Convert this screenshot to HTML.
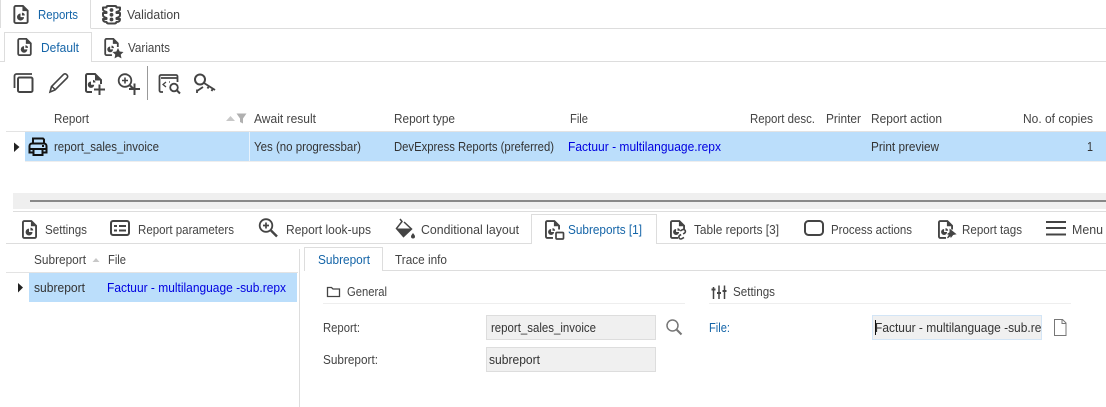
<!DOCTYPE html>
<html><head><meta charset="utf-8"><style>
html,body{margin:0;padding:0;background:#fff;width:1106px;height:407px;overflow:hidden}
svg{display:block}
text{font-family:"Liberation Sans",sans-serif;font-size:12.5px;fill:#444}
.b{fill:#1565a8}.d{fill:#333}.l{fill:#0000e0}
.i{fill:none;stroke:#444;stroke-width:1.8}
</style></head><body>
<svg width="1106" height="407" viewBox="0 0 1106 407" xmlns="http://www.w3.org/2000/svg">
<defs>
<symbol id="doc" viewBox="0 0 16 20" overflow="visible">
<path d="M1 2.500A1.500 1.500 0 0 1 2.500 1H10L15 6V17.500A1.500 1.500 0 0 1 13.500 19H2.500A1.500 1.500 0 0 1 1 17.500Z" fill="none" stroke="#444" stroke-width="2"/>
<path d="M9.500 1.500V6.500H14.500Z" fill="#444"/>
<path d="M7.500 9A3.700 3.700 0 1 0 11.200 12.700H7.500Z" fill="#444"/>
<path d="M9 8A3 3 0 0 1 12 11H9Z" fill="#444"/>
</symbol>
<symbol id="docb" viewBox="0 0 16 20" overflow="visible">
<path d="M8.500 19H2.500A1.500 1.500 0 0 1 1 17.500V2.500A1.500 1.500 0 0 1 2.500 1H10L15 6V10" fill="none" stroke="#444" stroke-width="2"/>
<path d="M9.500 1.500V6.500H14.500Z" fill="#444"/>
<path d="M6.500 9.500A3.200 3.200 0 1 0 9.700 12.700H6.500Z" fill="#444"/>
<path d="M8 8.500A2.800 2.800 0 0 1 10.800 11.300H8Z" fill="#444"/>
</symbol>
</defs>

<!-- top tabs -->
<path d="M0 28.500H1106" stroke="#ddd"/>
<rect x="0" y="-1" width="90.500" height="30" fill="#fff"/>
<path d="M0.500 0V28M90.500 0V28" stroke="#ddd"/>
<use href="#doc" x="13" y="5" width="16" height="19"/>
<text x="38" y="19" class="b" textLength="40" lengthAdjust="spacingAndGlyphs">Reports</text>
<path d="M108 6H115Q116.500 6 116.500 7.500H120V9.500Q120 11 116.500 12V13H120V15Q120 17 116.500 18V19H120Q120 22 116.500 22Q116 23.500 114.500 23.500H108.500Q107 23.500 106.500 22Q103 22 103 19H106.500V18Q103 17 103 15V13H106.500V12Q103 11 103 9.500V7.500H106.500Q106.500 6 108 6Z" fill="none" stroke="#444" stroke-width="2" stroke-linejoin="round"/>
<g fill="#444"><circle cx="111.500" cy="10" r="1.900"/><circle cx="111.500" cy="14.800" r="1.900"/><circle cx="111.500" cy="19.500" r="1.900"/></g>
<text x="127" y="19" textLength="53" lengthAdjust="spacingAndGlyphs">Validation</text>

<!-- second tabs -->
<path d="M0 61.500H1106" stroke="#ddd"/>
<rect x="4" y="32" width="87" height="30" fill="#fff"/>
<path d="M4.500 62V32.500H91.500V62" fill="none" stroke="#ddd"/>
<use href="#doc" x="17" y="38" width="15" height="18"/>
<text x="41" y="52" class="b" textLength="38" lengthAdjust="spacingAndGlyphs">Default</text>
<use href="#docb" x="104" y="38" width="15" height="18"/>
<path d="M118 48l1.700 3.500 3.800.5-2.800 2.600.8 3.800-3.500-1.900-3.500 1.900.8-3.800-2.800-2.600 3.800-.5Z" fill="#444"/>
<text x="128" y="52" textLength="42" lengthAdjust="spacingAndGlyphs">Variants</text>

<!-- toolbar -->
<g class="i">
<path d="M14.500 88V76a2 2 0 0 1 2-2H32" stroke-width="1.800"/>
<rect x="18" y="77.500" width="14.500" height="14.500" rx="1.500" stroke-width="2"/>
<path d="M50 92l1.500-5.500 12-12a2 2 0 0 1 3 0l.5.500a2 2 0 0 1 0 3l-12 12Z" stroke-width="1.600"/>
<path d="M52 86.500l3.500 3.500" stroke-width="1.400"/>
<path d="M92 92H87.500A1.500 1.500 0 0 1 86 90.500V75.500A1.500 1.500 0 0 1 87.500 74H95L101 80V84" stroke-width="2"/>
<circle cx="125" cy="80.500" r="6.300"/>
<path d="M130 85.500l3 3" stroke-width="2.200"/>
<path d="M122 80.500h6M125 77.500v6" stroke-width="1.600"/>
<path d="M161 78h17M163 92h-2a1.500 1.500 0 0 1-1.500-1.500v-14A1.500 1.500 0 0 1 161 75h15a1.500 1.500 0 0 1 1.500 1.500V82" stroke-width="1.800"/>
<path d="M166 82l-3 2.500 3 2.500M170 82l-1 0" stroke-width="1.300"/>
<circle cx="174" cy="87.500" r="3.800"/>
<path d="M177 90.500l3 3" stroke-width="2"/>
<circle cx="200" cy="79.500" r="5" stroke-width="2"/>
<path d="M204 83l11 7M209 86l-1.500 2.500M213 88.500l-1.500 2.500" stroke-width="1.900"/>
<path d="M203 87l-6 4M197 89.500v3.500" stroke-width="1.800"/>
</g>
<path d="M95 74.500V80.500H100.500Z" fill="#444"/>
<path d="M91 81.500A3.200 3.200 0 1 0 94.200 84.700H91Z" fill="#444"/>
<path d="M93 80a2.500 2.500 0 0 1 2.500 2.500H93Z" fill="#444"/>
<path d="M99.500 84.500V95M94 89.500H105" stroke="#444" stroke-width="2" fill="none"/>
<path d="M134.500 83.500V95M129 89H140" stroke="#444" stroke-width="2" fill="none"/>
<path d="M147.500 66V100" stroke="#999"/>

<!-- grid header -->
<text x="54" y="123" textLength="35" lengthAdjust="spacingAndGlyphs">Report</text>
<path d="M226 121l4.500-5 4.500 5Z" fill="#c8c8c8"/>
<path d="M236.500 113.500H246.500L243 118.500V123.500L240 122V118.500Z" fill="#b0b0b0"/>
<text x="254" y="123" textLength="62" lengthAdjust="spacingAndGlyphs">Await result</text>
<text x="394" y="123" textLength="61" lengthAdjust="spacingAndGlyphs">Report type</text>
<text x="570" y="123" textLength="18" lengthAdjust="spacingAndGlyphs">File</text>
<text x="750" y="123" textLength="65" lengthAdjust="spacingAndGlyphs">Report desc.</text>
<text x="826" y="123" textLength="35" lengthAdjust="spacingAndGlyphs">Printer</text>
<text x="871" y="123" textLength="71" lengthAdjust="spacingAndGlyphs">Report action</text>
<text x="1023" y="123" textLength="70" lengthAdjust="spacingAndGlyphs">No. of copies</text>
<rect x="6" y="131" width="1100" height="1" fill="#e3e3e3"/>
<rect x="25" y="132" width="1081" height="29" fill="#bbdefb"/>
<rect x="25" y="161" width="1081" height="1" fill="#eee"/>
<rect x="249" y="132" width="1" height="29" fill="#e8f3fd"/>
<path d="M14 142.500l5.500 4.500-5.500 5Z" fill="#222"/>
<g fill="none" stroke="#111" stroke-width="2">
<path d="M33 143V138.500H43L44 139.500V143"/>
<path d="M32.500 152.500H29.500V146a2.500 2.500 0 0 1 2.500-2.500H44a2.500 2.500 0 0 1 2.500 2.500V152.500H43.500"/>
<rect x="33.500" y="149" width="9" height="6"/>
</g>
<rect x="30" y="148" width="16" height="2" fill="#111"/>
<rect x="42" y="145" width="2" height="2" fill="#111"/>
<text x="54" y="151" class="d" textLength="105" lengthAdjust="spacingAndGlyphs">report_sales_invoice</text>
<text x="254" y="151" class="d" textLength="107" lengthAdjust="spacingAndGlyphs">Yes (no progressbar)</text>
<text x="394" y="151" class="d" textLength="160" lengthAdjust="spacingAndGlyphs">DevExpress Reports (preferred)</text>
<text x="568" y="151" class="l" textLength="153" lengthAdjust="spacingAndGlyphs">Factuur - multilanguage.repx</text>
<text x="871" y="151" class="d" textLength="68" lengthAdjust="spacingAndGlyphs">Print preview</text>
<text x="1087" y="151" class="d" textLength="6" lengthAdjust="spacingAndGlyphs">1</text>

<!-- scrollbar / splitter -->
<rect x="13" y="193" width="1093" height="16" fill="#efefef"/>
<rect x="30" y="200" width="1076" height="2" fill="#888"/>
<rect x="13" y="211" width="1093" height="1" fill="#ddd"/>

<!-- bottom tabs -->
<path d="M6 243.500H1106" stroke="#ddd"/>
<rect x="531" y="214" width="126" height="30" fill="#fff"/>
<path d="M531.500 244V214.500H656.500V244" fill="none" stroke="#ddd"/>
<use href="#doc" x="22" y="220" width="15" height="19"/>
<text x="45" y="234" textLength="42" lengthAdjust="spacingAndGlyphs">Settings</text>
<rect x="111" y="221" width="18" height="14" rx="2" fill="none" stroke="#444" stroke-width="2"/>
<path d="M114 225h3v2h-3zM114 229.500h3v2h-3z" fill="#444"/><path d="M119 226h7M119 230.500h7" stroke="#444" stroke-width="2"/>
<text x="138" y="234" textLength="96" lengthAdjust="spacingAndGlyphs">Report parameters</text>
<circle cx="266" cy="225.500" r="6.300" fill="none" stroke="#444" stroke-width="1.800"/>
<path d="M271 230.500l6 6" stroke="#444" stroke-width="2.400"/>
<path d="M263 225.500h6M266 222.500v6" stroke="#444" stroke-width="1.700"/>
<text x="286" y="234" textLength="85" lengthAdjust="spacingAndGlyphs">Report look-ups</text>
<path d="M400 219l2 2.500-5.500 7 7 8 8-7.500L404 222" fill="none" stroke="#444" stroke-width="1.500"/>
<path d="M397 228.500h14.500l-7.500 7.500-1 .5Z" fill="#444"/>
<path d="M413 233c1 1.500 2 2.300 2 3.500a2 2 0 0 1-4 0c0-1.200 1-2 2-3.500Z" fill="#444"/>
<text x="421" y="234" textLength="98" lengthAdjust="spacingAndGlyphs">Conditional layout</text>
<use href="#docb" x="545" y="220" width="15" height="19"/>
<rect x="556" y="232.500" width="7.500" height="6.500" rx="1" fill="#fff" stroke="#444" stroke-width="1.700"/>
<text x="568" y="234" class="b" textLength="74" lengthAdjust="spacingAndGlyphs">Subreports [1]</text>
<use href="#docb" x="670" y="220" width="15" height="19"/>
<path d="M682 230.500h2.500a2 2 0 0 1 0 4H683M682 238h-2.500a2 2 0 0 1 0-4H681" transform="rotate(-30 682 234)" fill="none" stroke="#444" stroke-width="1.600"/>
<text x="694" y="234" textLength="85" lengthAdjust="spacingAndGlyphs">Table reports [3]</text>
<rect x="805" y="221" width="18" height="14" rx="3.500" fill="none" stroke="#444" stroke-width="2"/>
<text x="831" y="234" textLength="81" lengthAdjust="spacingAndGlyphs">Process actions</text>
<use href="#docb" x="938" y="220" width="15" height="19"/>
<path d="M950 229.500l5.500 4.500-2.500 .5-2 2.500-.5-1.500-3 2.500 2-3.500-1.500-.5 2-1.500Z" fill="#444" stroke="#444"/>
<text x="962" y="234" textLength="60" lengthAdjust="spacingAndGlyphs">Report tags</text>
<path d="M1046 222h20M1046 228h20M1046 234.500h20" stroke="#444" stroke-width="2"/>
<text x="1072" y="234" textLength="31" lengthAdjust="spacingAndGlyphs">Menu</text>

<!-- sub grid -->
<text x="34" y="264" textLength="52" lengthAdjust="spacingAndGlyphs">Subreport</text>
<path d="M92.500 262l3.500-4 3.500 4Z" fill="#c8c8c8"/>
<text x="108" y="264" textLength="18" lengthAdjust="spacingAndGlyphs">File</text>
<rect x="6" y="272" width="292" height="1" fill="#e3e3e3"/>
<rect x="29" y="273" width="268" height="29" fill="#bbdefb"/>
<path d="M18 283l5 4.500-5 5Z" fill="#222"/>
<text x="34" y="292" class="d" textLength="51" lengthAdjust="spacingAndGlyphs">subreport</text>
<text x="107" y="292" class="l" textLength="179" lengthAdjust="spacingAndGlyphs">Factuur - multilanguage -sub.repx</text>
<path d="M299.500 249V407" stroke="#ddd"/>

<!-- detail tabs -->
<path d="M304 270.500H1106" stroke="#ddd"/>
<rect x="304" y="247" width="79" height="24" fill="#fff"/>
<path d="M304.500 271V247.500H382.500V271" fill="none" stroke="#ddd"/>
<text x="318" y="264" class="b" textLength="52" lengthAdjust="spacingAndGlyphs">Subreport</text>
<text x="395" y="264" textLength="52" lengthAdjust="spacingAndGlyphs">Trace info</text>

<!-- General -->
<path d="M327.500 287.500h4l1.500 1.500h6.500v7.500h-12Z" fill="none" stroke="#444" stroke-width="1.300"/>
<text x="347" y="296" textLength="40" lengthAdjust="spacingAndGlyphs">General</text>
<rect x="323" y="303" width="362" height="1" fill="#eee"/>
<!-- Settings -->
<path d="M713.500 287v12M719 285.500v13.500M724.500 285.500v13.500" stroke="#444" stroke-width="1.500"/>
<path d="M711.500 289.500h4M717 293h4M722.500 291h4" stroke="#444" stroke-width="2"/>
<text x="733" y="296" textLength="42" lengthAdjust="spacingAndGlyphs">Settings</text>
<rect x="709" y="303" width="362" height="1" fill="#eee"/>

<!-- Form -->
<text x="323" y="332" textLength="37" lengthAdjust="spacingAndGlyphs">Report:</text>
<rect x="486.500" y="315.500" width="169" height="24" fill="#f0f0f0" stroke="#ddd"/>
<text x="491" y="332" class="d" textLength="105" lengthAdjust="spacingAndGlyphs">report_sales_invoice</text>
<circle cx="672.500" cy="325.500" r="5.500" fill="none" stroke="#777" stroke-width="1.500"/>
<path d="M676.500 329.500l5 5" stroke="#777" stroke-width="2"/>
<text x="323" y="364" textLength="55" lengthAdjust="spacingAndGlyphs">Subreport:</text>
<rect x="486.500" y="347.500" width="169" height="24" fill="#f0f0f0" stroke="#ddd"/>
<text x="489" y="364" class="d" textLength="51" lengthAdjust="spacingAndGlyphs">subreport</text>
<text x="709" y="332" class="b" textLength="21" lengthAdjust="spacingAndGlyphs">File:</text>
<rect x="872.500" y="315.500" width="169" height="24" fill="#f0f0f0" stroke="#d3e5f6"/>
<svg x="874" y="316" width="167" height="23"><text x="1" y="16" class="d" textLength="179" lengthAdjust="spacingAndGlyphs">Factuur - multilanguage -sub.repx</text></svg>
<rect x="875" y="320" width="1" height="15" fill="#111"/>
<path d="M1054.500 319.500h8l3.500 3.500v12.500h-11.500Z" fill="#fff" stroke="#777"/>
<path d="M1062 319.500V323.500H1066" fill="none" stroke="#777"/>
</svg>
</body></html>
